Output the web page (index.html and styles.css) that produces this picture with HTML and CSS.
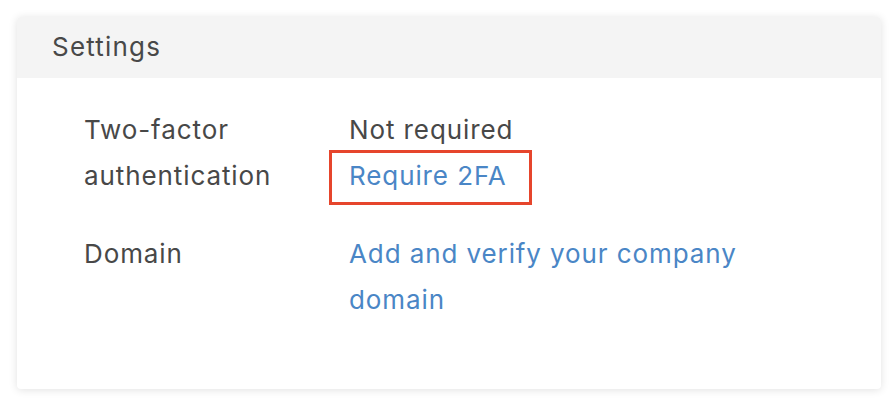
FILE: index.html
```html
<!DOCTYPE html>
<html>
<head>
<meta charset="utf-8">
<link rel="stylesheet" href="styles.css">
</head>
<body>
<div class="card">
  <div class="card-header">Settings</div>
  <div class="card-body">
    <div class="row">
      <div class="label">Two-factor<br>authentication</div>
      <div class="value">
        <div class="text">Not required</div>
        <a class="link highlight" href="#">Require 2FA</a>
      </div>
    </div>
    <div class="row">
      <div class="label">Domain</div>
      <div class="value">
        <a class="link" href="#">Add and verify your company<br>domain</a>
      </div>
    </div>
  </div>
</div>
</body>
</html>
```
FILE: styles.css
```css
html, body { margin: 0; padding: 0; background: #fff; }
body {
  font-family: Inter, "Noto Sans", sans-serif;
  color: #484848;
  padding: 17px 13px 15px 17px;
}
.card {
  width: 864px;
  height: 372px;
  background: #fff;
  border-radius: 4px;
  box-shadow: 0 1px 8px rgba(0,0,0,0.12);
  overflow: hidden;
}
.card-header {
  background: #f4f4f4;
  height: 61px;
  line-height: 60px;
  padding-left: 35px;
  font-size: 26px;
  letter-spacing: 1.2px;
}
.card-body {
  padding: 29px 0 0 67px;
  display: flex;
  flex-direction: column;
  gap: 32px;
}
.row {
  display: flex;
  font-size: 26px;
  letter-spacing: 0.9px;
  line-height: 46px;
}
.label { width: 265px; }
.value { display: flex; flex-direction: column; align-items: flex-start; }
.link { color: #4a86c6; text-decoration: none; }
.highlight { position: relative; }
.highlight::after {
  content: "";
  position: absolute;
  left: -20px;
  top: -3px;
  right: -25px;
  bottom: -6px;
  border: 3px solid #e6452c;
}
```
